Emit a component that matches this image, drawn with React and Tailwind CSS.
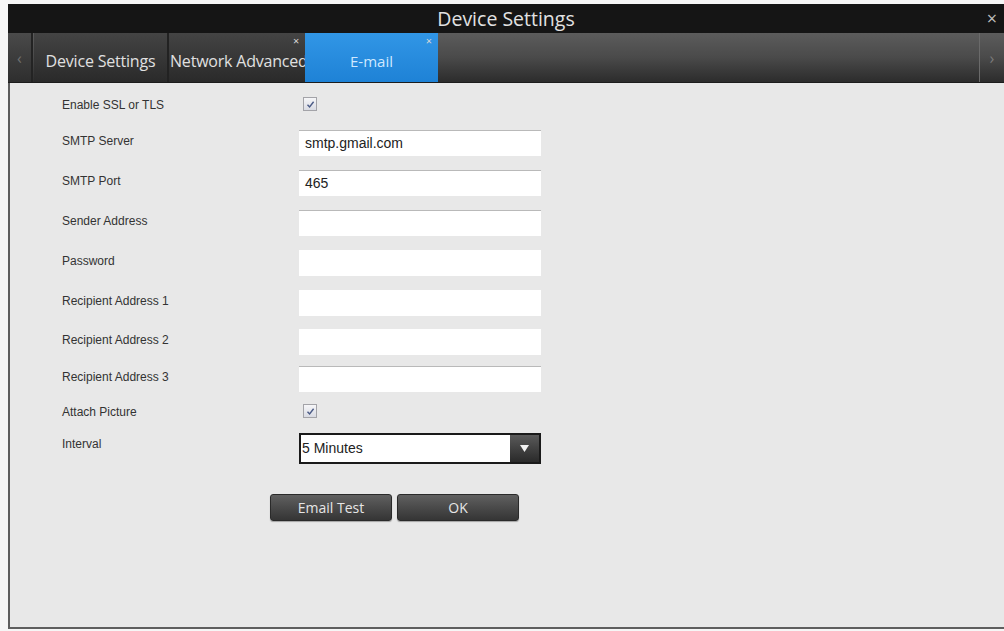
import React from "react";

const Check = () => (
  <span className="ml-[4px] flex h-[14px] w-[14px] items-center justify-center border border-[#a3a3a8] bg-gradient-to-b from-[#f6f6f8] to-[#d9dbe3]">
    <svg width="9" height="9" viewBox="0 0 9 9">
      <path d="M1.5 4.8 L3.6 7 L7.6 1.8" fill="none" stroke="#4b5b86" strokeWidth="1.4" />
    </svg>
  </span>
);

const Field = ({ value, line }) => (
  <div
    className={`flex h-[26px] w-[242px] items-center bg-white px-[6px] text-[14px] text-[#222] ${
      line ? "border-t border-[#b9b9b9]" : ""
    }`}
  >
    {value}
  </div>
);

const Label = ({ children }) => (
  <div className="w-[237px] pt-[4px] text-[12px] leading-[14px] text-[#333]">{children}</div>
);

const TabX = () => (
  <span className="absolute right-[6px] top-[3px] text-[11px] leading-[10px] text-[#d8d8d8]">×</span>
);

export default function App() {
  return (
    <div className="flex h-[631px] w-[1004px] flex-col bg-[#f6f6f6] pl-[8px] pt-[4px] font-['Liberation_Sans',Arial,sans-serif]">
      {/* title bar */}
      <div className="relative flex h-[29px] shrink-0 items-center justify-center bg-[#151515] font-['Open_Sans',sans-serif] text-[19.5px] text-[#e2e2e2]">
        Device Settings
        <span className="absolute right-[7px] top-[4px] text-[18px] leading-[20px] text-[#bdbdbd]">×</span>
      </div>

      {/* tabs */}
      <div className="flex h-[50px] shrink-0 border-b border-[#1c1c1c] bg-gradient-to-b from-[#5c5c5c] via-[#4a4a4a] to-[#2c2c2c] font-['Open_Sans',sans-serif]">
        <div className="flex w-[25px] items-center justify-center border-r-2 border-[#232323] bg-gradient-to-b from-[#4a4a4a] to-[#2e2e2e] text-[16px] text-[#707070]">
          ‹
        </div>
        <div className="relative ml-[1px] flex w-[135px] items-center justify-center whitespace-nowrap border-r-2 border-[#222] bg-gradient-to-b from-[#444] to-[#2a2a2a] pt-[6px] text-[16px] leading-[18px] tracking-[-0.2px] text-[#e0e0e0]">
          Device Settings
        </div>
        <div className="relative flex w-[136px] items-center overflow-hidden whitespace-nowrap bg-gradient-to-b from-[#444] to-[#2a2a2a] pl-[1px] pt-[6px] text-[16px] leading-[18px] tracking-[-0.2px] text-[#e0e0e0]">
          Network Advanced
          <TabX />
        </div>
        <div className="relative flex w-[133px] items-center justify-center bg-gradient-to-b from-[#3196e6] to-[#1e82d6] pt-[6px] text-[15px] leading-[18px] text-[#cfe8ff]">
          E-mail
          <TabX />
        </div>
        <div className="flex-1" />
        <div className="flex w-[25px] items-center justify-center border-l border-[#6a6a6a] text-[16px] text-[#7a7a7a]">
          ›
        </div>
      </div>

      {/* content */}
      <div className="flex h-[546px] shrink-0 flex-col border-b-2 border-l-2 border-[#5e5e5e] bg-[#e8e8e8] pl-[52px] pt-[14px]">
        <div className="flex h-[33px] items-start">
          <div className="w-[237px] pt-[1px] text-[12px] leading-[14px] text-[#333]">Enable SSL or TLS</div>
          <Check />
        </div>
        <div className="flex h-[40px] items-start">
          <Label>SMTP Server</Label>
          <Field value="smtp.gmail.com" line />
        </div>
        <div className="flex h-[40px] items-start">
          <Label>SMTP Port</Label>
          <Field value="465" line />
        </div>
        <div className="flex h-[40px] items-start">
          <Label>Sender Address</Label>
          <Field line />
        </div>
        <div className="flex h-[40px] items-start">
          <Label>Password</Label>
          <Field />
        </div>
        <div className="flex h-[39px] items-start">
          <Label>Recipient Address 1</Label>
          <Field />
        </div>
        <div className="flex h-[37px] items-start">
          <Label>Recipient Address 2</Label>
          <Field />
        </div>
        <div className="flex h-[38px] items-start">
          <Label>Recipient Address 3</Label>
          <Field line />
        </div>
        <div className="flex h-[29px] items-start">
          <div className="w-[237px] pt-[1px] text-[12px] leading-[14px] text-[#333]">Attach Picture</div>
          <Check />
        </div>
        <div className="flex h-[61px] items-start">
          <Label>Interval</Label>
          <div className="flex h-[31px] w-[242px] border-2 border-[#1a1a1a] bg-white">
            <div className="flex flex-1 items-center pl-[1px] text-[14px] text-[#222]">5 Minutes</div>
            <div className="flex w-[29px] items-center justify-center bg-gradient-to-b from-[#5a5a5a] to-[#2a2a2a]">
              <svg width="9" height="7" viewBox="0 0 9 7">
                <path d="M0 0 H9 L4.5 7 Z" fill="#f2f2f2" />
              </svg>
            </div>
          </div>
        </div>
        <div className="ml-[208px] flex gap-[5px] font-['Open_Sans',sans-serif]">
          <button className="h-[27px] w-[122px] rounded-[3px] border border-[#2a2a2a] bg-gradient-to-b from-[#606060] to-[#353535] text-[14px] text-[#e6e6e6] shadow-[0_1px_1px_rgba(0,0,0,0.3)]">
            Email Test
          </button>
          <button className="h-[27px] w-[122px] rounded-[3px] border border-[#2a2a2a] bg-gradient-to-b from-[#606060] to-[#353535] text-[14px] text-[#e6e6e6] shadow-[0_1px_1px_rgba(0,0,0,0.3)]">
            OK
          </button>
        </div>
      </div>
    </div>
  );
}
